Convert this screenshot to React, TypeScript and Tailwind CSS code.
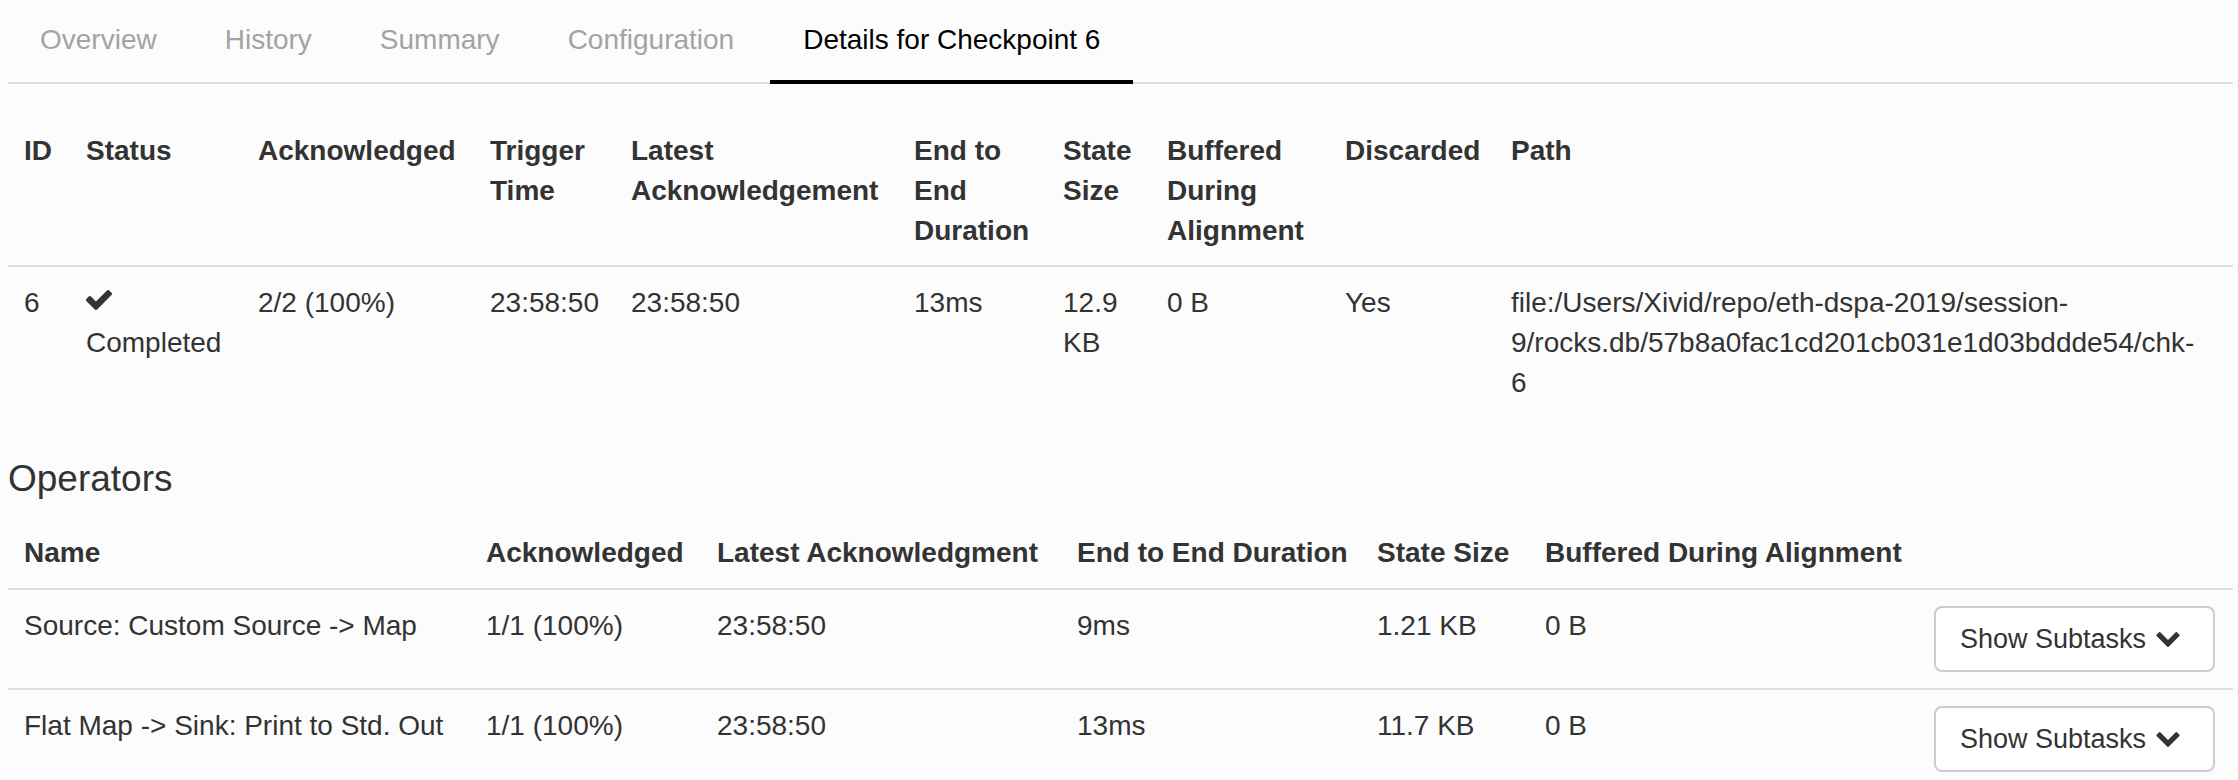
import React from "react";

const tabs = ["Overview", "History", "Summary", "Configuration", "Details for Checkpoint 6"];

function Check() {
  return (
    <svg width="26" height="20" viewBox="121 334 1550 1188" className="block">
      <path
        fill="#333"
        d="M1671 566q0 40-28 68l-724 724-136 136q-28 28-68 28t-68-28l-136-136-362-362q-28-28-28-68t28-68l136-136q28-28 68-28t68 28l294 295 656-657q28-28 68-28t68 28l136 136q28 28 28 68z"
      />
    </svg>
  );
}

function Chevron() {
  return (
    <svg width="24" height="15" viewBox="90 533 1612 1035" className="ml-[10px] block">
      <path
        fill="#333"
        d="M1683 808l-742 741q-19 19-45 19t-45-19l-742-741q-19-19-19-45.5t19-45.5l166-165q19-19 45-19t45 19l531 531 531-531q19-19 45-19t45 19l166 165q19 19 19 45.5t-19 45.5z"
      />
    </svg>
  );
}

function SubtaskButton() {
  return (
    <div className="flex justify-end">
      <button className="flex items-center w-[283px] h-[66px] pl-[24px] border-2 border-[#ccc] rounded-[8px] bg-white text-[27px] leading-[40px] text-[#333] font-['Liberation_Sans',Arial,sans-serif]">
        <span>Show Subtasks</span>
        <Chevron />
      </button>
    </div>
  );
}

const th = "text-left align-top font-bold px-[16px] pt-[16px] pb-[14px] border-b-2 border-[#ddd]";
const td = "text-left align-top px-[16px] pt-[16px] pb-[16px] whitespace-nowrap";
const oth = "text-left align-top font-bold px-[16px] pt-[16px] pb-[15px] border-b-2 border-[#ddd] whitespace-nowrap";

const operators = [
  { name: "Source: Custom Source -> Map", ack: "1/1 (100%)", latest: "23:58:50", dur: "9ms", size: "1.21 KB", buf: "0 B" },
  { name: "Flat Map -> Sink: Print to Std. Out", ack: "1/1 (100%)", latest: "23:58:50", dur: "13ms", size: "11.7 KB", buf: "0 B" },
];

export default function App() {
  return (
    <div className="min-h-screen bg-[#fcfcfc] pr-[5px] font-['Liberation_Sans',Arial,sans-serif] text-[#333] text-[28px] leading-[40px]">
      <div className="ml-[8px] flex gap-[4px] border-b-2 border-[#ddd]">
        {tabs.map((t, i) =>
          i === tabs.length - 1 ? (
            <div key={t} className="px-[33px] pt-[20px] pb-[20px] -mb-[2px] border-b-4 border-black text-black whitespace-nowrap">
              {t}
            </div>
          ) : (
            <div key={t} className="px-[32px] pt-[20px] pb-[20px] -mb-[2px] border-b-4 border-transparent text-[#a3a3a3] whitespace-nowrap">
              {t}
            </div>
          )
        )}
      </div>

      <div className="ml-[8px]">
        <table className="table-fixed w-full mt-[31px] mb-[40px]">
          <colgroup>
            <col className="w-[62px]" />
            <col className="w-[172px]" />
            <col className="w-[232px]" />
            <col className="w-[141px]" />
            <col className="w-[283px]" />
            <col className="w-[149px]" />
            <col className="w-[104px]" />
            <col className="w-[178px]" />
            <col className="w-[166px]" />
            <col />
          </colgroup>
          <thead>
            <tr>
              <th className={th}>ID</th>
              <th className={th}>Status</th>
              <th className={th}>Acknowledged</th>
              <th className={th}>Trigger<br />Time</th>
              <th className={th}>Latest<br />Acknowledgement</th>
              <th className={th}>End to<br />End<br />Duration</th>
              <th className={th}>State<br />Size</th>
              <th className={th}>Buffered<br />During<br />Alignment</th>
              <th className={th}>Discarded</th>
              <th className={th}>Path</th>
            </tr>
          </thead>
          <tbody>
            <tr>
              <td className={td}>6</td>
              <td className={td}>
                <div className="h-[40px] pt-[7px]">
                  <Check />
                </div>
                <div>Completed</div>
              </td>
              <td className={td}>2/2 (100%)</td>
              <td className={td}>23:58:50</td>
              <td className={td}>23:58:50</td>
              <td className={td}>13ms</td>
              <td className={td}>12.9<br />KB</td>
              <td className={td}>0 B</td>
              <td className={td}>Yes</td>
              <td className={td}>
                file:/Users/Xivid/repo/eth-dspa-2019/session-
                <br />
                9/rocks.db/57b8a0fac1cd201cb031e1d03bddde54/chk-
                <br />
                6
              </td>
            </tr>
          </tbody>
        </table>

        <h4 className="text-[37px] leading-[40px] font-normal text-[#333] mb-[18px]">Operators</h4>

        <table className="table-fixed w-full">
          <colgroup>
            <col className="w-[462px]" />
            <col className="w-[231px]" />
            <col className="w-[360px]" />
            <col className="w-[300px]" />
            <col className="w-[168px]" />
            <col className="w-[389px]" />
            <col />
          </colgroup>
          <thead>
            <tr>
              <th className={oth}>Name</th>
              <th className={oth}>Acknowledged</th>
              <th className={oth}>Latest Acknowledgment</th>
              <th className={oth}>End to End Duration</th>
              <th className={oth}>State Size</th>
              <th className={oth}>Buffered During Alignment</th>
              <th className={oth}></th>
            </tr>
          </thead>
          <tbody>
            {operators.map((o) => (
              <tr key={o.name} className="border-t-2 border-[#ddd]">
                <td className={td}>{o.name}</td>
                <td className={td}>{o.ack}</td>
                <td className={td}>{o.latest}</td>
                <td className={td}>{o.dur}</td>
                <td className={td}>{o.size}</td>
                <td className={td}>{o.buf}</td>
                <td className="align-top pl-[16px] pr-[18px] pt-[16px] pb-[16px]">
                  <SubtaskButton />
                </td>
              </tr>
            ))}
          </tbody>
        </table>
      </div>
    </div>
  );
}
